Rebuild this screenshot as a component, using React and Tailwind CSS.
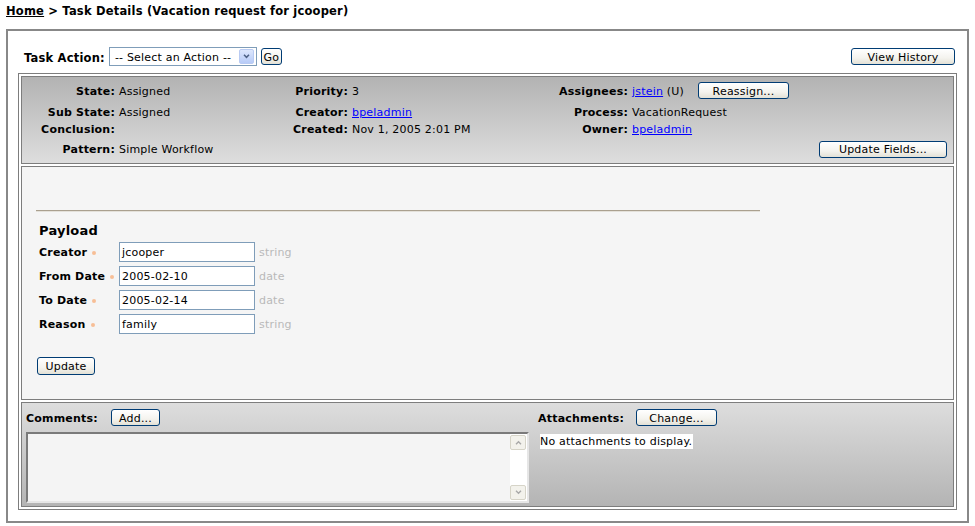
import React from 'react'

const font = "font-['DejaVu_Sans',Verdana,sans-serif]"

function XpButton({ w, children, className = '' }) {
  return (
    <button
      type="button"
      className={`flex h-[17px] ${w} items-center justify-center rounded-[3px] border border-[#003c74] bg-[linear-gradient(to_bottom,#ffffff,#f4f3ee_60%,#e3e1d6)] pt-[1px] text-[11px] leading-none text-black ${className}`}
    >
      {children}
    </button>
  )
}

function Link({ children }) {
  return <span className="text-[#0000ff] underline">{children}</span>
}

function Dot() {
  return <span className="ml-[5px] inline-block h-[4px] w-[4px] rounded-full bg-[#f8b07e] opacity-80" />
}

function Label({ children }) {
  return <div className="pr-[4px] pt-[2px] text-right font-bold">{children}</div>
}

function Val({ children }) {
  return <div className="pt-[2px]">{children}</div>
}

const fields = [
  { label: 'Creator', value: 'jcooper', type: 'string' },
  { label: 'From Date', value: '2005-02-10', type: 'date' },
  { label: 'To Date', value: '2005-02-14', type: 'date' },
  { label: 'Reason', value: 'family', type: 'string' }
]

function Chevron({ up }) {
  return (
    <svg viewBox="0 0 8 6" className="h-[5px] w-[7px]">
      <path d={up ? 'M1 5 L4 2 L7 5' : 'M1 1 L4 4 L7 1'} fill="none" stroke="#a8a8a8" strokeWidth="1.6" />
    </svg>
  )
}

export default function App() {
  return (
    <div className={`h-[526px] w-[975px] overflow-hidden bg-white text-[11px] leading-[14px] tracking-[0.2px] text-black ${font}`}>
      <div className="h-[29px] pl-[6px] pt-[4px] text-[11.5px] font-bold">
        <span className="underline">Home</span> &gt; Task Details (Vacation request for jcooper)
      </div>

      <div className="ml-[6px] h-[494px] w-[963px] border-2 border-[#888888] px-[10px] pt-[16px]">
        {/* action row */}
        <div className="flex h-[19px] items-center justify-between pl-[6px] pr-[2px]">
          <div className="flex items-center">
            <span className="pt-[2px] text-[11.5px] font-bold">Task Action:</span>
            <div className="ml-[4px] flex h-[19px] w-[148px] items-center justify-between border border-[#7f9db9] bg-white pl-[5px] pr-[2px]">
              <span className="pt-[2px]">-- Select an Action --</span>
              <span className="flex h-[15px] w-[15px] items-center justify-center rounded-[2px] border border-[#b9cbf3] bg-[linear-gradient(to_bottom,#dde7fd,#b7cbf7)]">
                <svg viewBox="0 0 8 6" className="h-[5px] w-[7px]">
                  <path d="M1 1 L4 4 L7 1" fill="none" stroke="#4d6185" strokeWidth="1.8" />
                </svg>
              </span>
            </div>
            <XpButton w="w-[21px]" className="ml-[4px]">Go</XpButton>
          </div>
          <XpButton w="w-[104px]">View History</XpButton>
        </div>

        {/* details table */}
        <div className="mt-[7px] flex flex-col gap-[2px] border border-[#7d7d7d] p-[2px]">
          <div className="h-[88px] border border-[#7d7d7d] bg-[linear-gradient(to_bottom,#b3b3b3,#dedede)] pb-[1px] pt-[3px]">
            <div className="grid grid-cols-[97px_151px_82px_188px_92px_1fr] grid-rows-[21px_21px_14px_26px] items-center">
              <Label>State:</Label>
              <Val>Assigned</Val>
              <Label>Priority:</Label>
              <Val>3</Val>
              <Label>Assignees:</Label>
              <div className="flex items-center">
                <span className="w-[66px] pt-[2px]"><Link>jstein</Link> (U)</span>
                <XpButton w="w-[91px]">Reassign...</XpButton>
              </div>

              <Label>Sub State:</Label>
              <Val>Assigned</Val>
              <Label>Creator:</Label>
              <Val><Link>bpeladmin</Link></Val>
              <Label>Process:</Label>
              <Val>VacationRequest</Val>

              <Label>Conclusion:</Label>
              <div />
              <Label>Created:</Label>
              <Val>Nov 1, 2005 2:01 PM</Val>
              <Label>Owner:</Label>
              <Val><Link>bpeladmin</Link></Val>

              <Label>Pattern:</Label>
              <Val>Simple Workflow</Val>
              <div />
              <div />
              <div />
              <div className="flex justify-end pr-[6px]">
                <XpButton w="w-[128px]">Update Fields...</XpButton>
              </div>
            </div>
          </div>

          <div className="h-[234px] border border-[#7d7d7d] bg-[#f5f5f5]">
            <div className="ml-[14px] mt-[43px] w-[724px] border-b border-t border-b-[#e4e1da] border-t-[#aaa08f]" />
            <div className="ml-[17px] mt-[11px] h-[16px] text-[13px] font-bold leading-[16px]">Payload</div>
            <div className="ml-[17px] mt-[1px]">
              {fields.map(f => (
                <div key={f.label} className="flex h-[24px] items-center">
                  <div className="flex w-[80px] items-center pt-[2px] font-bold">
                    {f.label}
                    <Dot />
                  </div>
                  <div className="flex h-[20px] w-[136px] items-center border border-[#7f9db9] bg-white px-[2px] pt-[1px]">{f.value}</div>
                  <span className="ml-[4px] pt-[2px] text-[#b9b9b9]">{f.type}</span>
                </div>
              ))}
            </div>
            <XpButton w="w-[58px]" className="ml-[15px] mt-[21px] h-[18px]">Update</XpButton>
          </div>

          <div className="flex h-[105px] border border-[#7d7d7d] bg-[linear-gradient(to_bottom,#dddddd,#b4b4b4)] pt-[6px]">
            <div className="w-[507px] pl-[4px]">
              <div className="flex h-[17px] items-center">
                <span className="w-[85px] pt-[2px] font-bold">Comments:</span>
                <XpButton w="w-[49px]">Add...</XpButton>
              </div>
              <div className="mt-[6px] flex h-[71px] w-[503px] border-2 border-b-[#e6e6e6] border-l-[#7a7a7a] border-r-[#e6e6e6] border-t-[#7a7a7a] bg-[#f4f4f4]">
                <div className="flex-1" />
                <div className="flex w-[17px] flex-col justify-between bg-white py-[1px]">
                  <div className="flex h-[15px] w-[16px] items-center justify-center rounded-[2px] border border-[#d6d4c8] bg-[#f3f2ec]">
                    <Chevron up />
                  </div>
                  <div className="flex h-[15px] w-[16px] items-center justify-center rounded-[2px] border border-[#d6d4c8] bg-[#f3f2ec]">
                    <Chevron />
                  </div>
                </div>
              </div>
            </div>
            <div className="pl-[9px]">
              <div className="flex h-[17px] items-center">
                <span className="w-[98px] pt-[2px] font-bold">Attachments:</span>
                <XpButton w="w-[81px]">Change...</XpButton>
              </div>
              <div className="ml-[2px] mt-[8px] inline-block bg-white pr-[1px] pt-[1px]">No attachments to display.</div>
            </div>
          </div>
        </div>
      </div>
    </div>
  )
}
